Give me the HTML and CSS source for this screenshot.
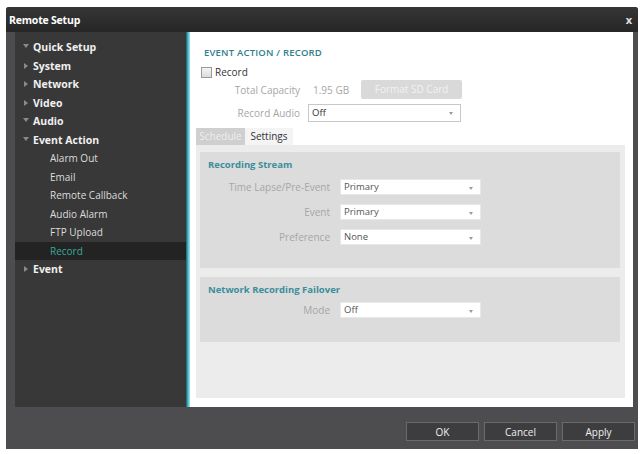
FILE: index.html
```html
<!DOCTYPE html>
<html lang="en">
<head>
    <meta charset="UTF-8">
    <meta name="viewport" content="width=device-width, initial-scale=1.0">
    <title>Remote Setup</title>
    <link rel="stylesheet" href="styles.css">
</head>
<body>
    <div class="window">
        <div class="titlebar">
            <span class="title">Remote Setup</span>
            <span class="close">x</span>
        </div>
        <div class="main">
            <ul class="sidebar">
                <li class="item open">Quick Setup</li>
                <li class="item">System</li>
                <li class="item">Network</li>
                <li class="item">Video</li>
                <li class="item open">Audio</li>
                <li class="item open">Event Action</li>
                <li class="sub">Alarm Out</li>
                <li class="sub">Email</li>
                <li class="sub">Remote Callback</li>
                <li class="sub">Audio Alarm</li>
                <li class="sub">FTP Upload</li>
                <li class="sub active">Record</li>
                <li class="item">Event</li>
            </ul>
            <div class="divider"></div>
            <div class="content">
                <h3 class="page-title">EVENT ACTION / RECORD</h3>
                <label class="check"><span class="box"></span>Record</label>
                <div class="form-top">
                    <span class="lbl">Total Capacity</span>
                    <div class="capacity">
                        <span class="cap-value">1.95 GB</span>
                        <span class="btn-disabled">Format SD Card</span>
                    </div>
                    <span class="lbl">Record Audio</span>
                    <div class="select wide">Off<span class="arrow"></span></div>
                </div>
                <div class="tabs">
                    <span class="tab off">Schedule</span>
                    <span class="tab on">Settings</span>
                </div>
                <div class="panel">
                    <div class="section stream">
                        <h4>Recording Stream</h4>
                        <div class="rows">
                            <span class="lbl">Time Lapse/Pre-Event</span>
                            <div class="select">Primary<span class="arrow"></span></div>
                            <span class="lbl">Event</span>
                            <div class="select">Primary<span class="arrow"></span></div>
                            <span class="lbl">Preference</span>
                            <div class="select">None<span class="arrow"></span></div>
                        </div>
                    </div>
                    <div class="section failover">
                        <h4>Network Recording Failover</h4>
                        <div class="rows">
                            <span class="lbl">Mode</span>
                            <div class="select">Off<span class="arrow"></span></div>
                        </div>
                    </div>
                </div>
            </div>
        </div>
        <div class="footer">
            <button class="btn">OK</button>
            <button class="btn">Cancel</button>
            <button class="btn">Apply</button>
        </div>
    </div>
</body>
</html>
```

FILE: styles.css
```css
body {
    margin: 0;
    padding: 0;
    background-color: #ffffff;
    font-family: "Open Sans", "DejaVu Sans", sans-serif;
    font-size: 10px;
}
.window {
    margin: 7px 0 0 6px;
    width: 632px;
    height: 442px;
    background-color: #4d4d4f;
    display: flex;
    flex-direction: column;
    border-radius: 3px 3px 0 0;
    overflow: hidden;
}
.titlebar {
    height: 25px;
    flex: none;
    background: linear-gradient(#363636, #262626);
    display: flex;
    align-items: center;
    justify-content: space-between;
    padding: 0 6px 0 3px;
    color: #ffffff;
}
.title {
    font-weight: bold;
    font-size: 10.5px;
    letter-spacing: -0.2px;
}
.close {
    font-weight: bold;
    font-size: 11px;
    color: #e0e0e0;
}
.main {
    display: flex;
    height: 375px;
    flex: none;
    padding: 0 5px 0 9px;
}
.sidebar {
    list-style: none;
    margin: 0;
    padding: 6px 0 0 0;
    width: 171px;
    background-color: #383838;
    color: #f0f0f0;
}
.sidebar li {
    height: 18.5px;
    line-height: 18.5px;
    white-space: nowrap;
}
.item {
    font-weight: bold;
    font-size: 10.5px;
    padding-left: 18px;
    position: relative;
}
.item::before {
    content: "";
    position: absolute;
    left: 9px;
    top: 6px;
    border-style: solid;
    border-width: 3px 0 3px 4px;
    border-color: transparent transparent transparent #8a8a8a;
}
.item.open::before {
    left: 8px;
    top: 6px;
    border-width: 4px 3px 0 3px;
    border-color: #8a8a8a transparent transparent transparent;
}
.sub {
    padding-left: 35px;
    color: #dcdcdc;
}
.sub.active {
    background-color: #232323;
    color: #3aa89a;
}
.divider {
    width: 4px;
    background: linear-gradient(90deg, #1e5c66, #55c8d2 60%, #9fe3e8);
}
.content {
    flex: 1;
    background-color: #ffffff;
    padding: 0 8px 9px 6px;
    display: flex;
    flex-direction: column;
}
.page-title {
    margin: 14px 0 0 8px;
    font-size: 9.5px;
    color: #2f7f8c;
    font-weight: 600;
    letter-spacing: 0.2px;
}
.check {
    display: flex;
    align-items: center;
    gap: 3px;
    margin: 6px 0 0 5px;
    color: #333333;
    font-size: 10px;
}
.box {
    width: 9px;
    height: 9px;
    border: 1px solid #9a9a9a;
    background: linear-gradient(#f4f4f4, #dcdcdc);
}
.form-top {
    display: grid;
    grid-template-columns: 104px 152px;
    column-gap: 8px;
    row-gap: 5px;
    align-items: center;
    margin-top: 1px;
}
.lbl {
    text-align: right;
    color: #a6a6a6;
    white-space: nowrap;
}
.capacity {
    display: flex;
    align-items: center;
    gap: 12px;
    padding-left: 5px;
    white-space: nowrap;
}
.cap-value {
    color: #a6a6a6;
}
.btn-disabled {
    flex: none;
    width: 101px;
    height: 19px;
    line-height: 19px;
    text-align: center;
    background-color: #d9d9d9;
    color: #f2f2f2;
    border-radius: 2px;
}
.select {
    height: 16px;
    line-height: 16px;
    border: 1px solid #c8c8c8;
    background-color: #ffffff;
    padding-left: 3px;
    color: #555555;
    position: relative;
    font-size: 9.5px;
}
.select.wide {
    width: 148px;
    color: #333333;
}
.arrow {
    position: absolute;
    right: 7px;
    top: 7px;
    border-style: solid;
    border-width: 3px 2px 0 2px;
    border-color: #9a9a9a transparent transparent transparent;
}
.tabs {
    display: flex;
    margin-top: 6px;
    height: 17px;
}
.tab {
    width: 49px;
    line-height: 17px;
    text-align: center;
}
.tab.off {
    background-color: #cfcfcf;
    color: #eeeeee;
}
.tab.on {
    width: 48px;
    background-color: #f4f4f4;
    color: #333333;
}
.panel {
    flex: 1;
    background-color: #ececec;
    padding: 7px 5px 0 4px;
    display: flex;
    flex-direction: column;
    gap: 9px;
}
.section {
    background-color: #dcdcdc;
    padding: 6px 0 0 0;
}
.section h4 {
    margin: 0 0 0 8px;
    font-size: 9.5px;
    color: #3a8e9b;
    font-weight: bold;
}
.rows {
    display: grid;
    grid-template-columns: 130px 141px;
    column-gap: 10px;
    row-gap: 9px;
    align-items: center;
    margin-top: 8px;
}
.rows .select {
    height: 14px;
    line-height: 14px;
    border-color: #e8e8e8;
}
.stream {
    height: 110px;
}
.failover {
    height: 59px;
}
.failover .rows {
    margin-top: 6px;
}
.footer {
    flex: 1;
    display: flex;
    justify-content: flex-end;
    align-items: flex-start;
    gap: 5px;
    padding: 15px 3px 0 0;
}
.btn {
    width: 73px;
    height: 19px;
    background-color: #3d3d3f;
    border: 1px solid #6a6a6c;
    color: #f0f0f0;
    font-family: "Open Sans", "DejaVu Sans", sans-serif;
    font-size: 10px;
    padding: 0;
}
```
